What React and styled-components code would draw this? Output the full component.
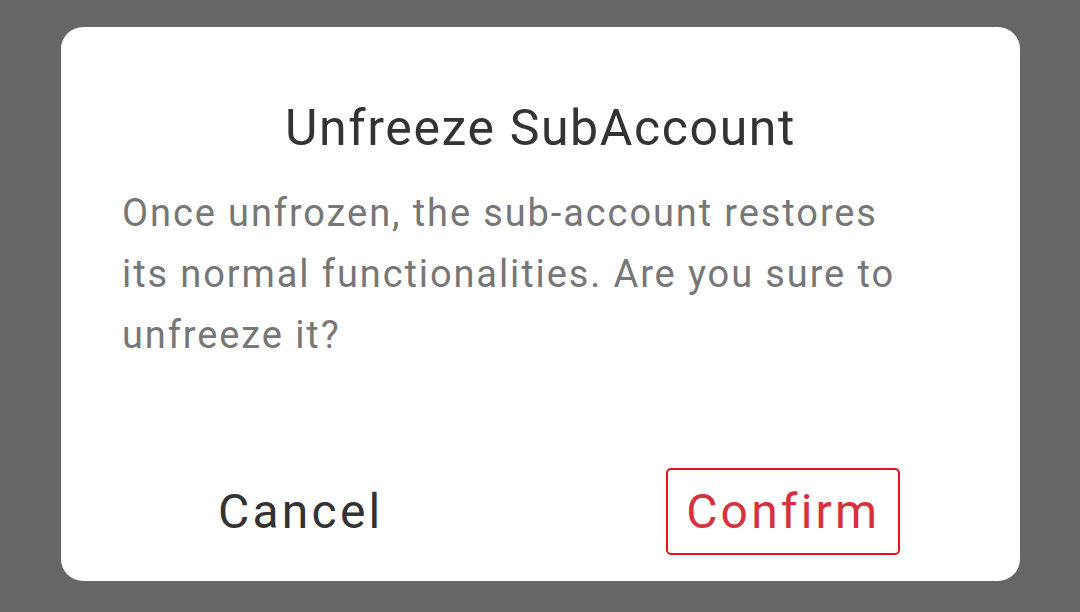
import React from 'react'
import styled, { createGlobalStyle } from 'styled-components'

const Global = createGlobalStyle`
	html, body {
		margin: 0;
		padding: 0;
		background: #666666;
		font-family: Roboto, "Liberation Sans", sans-serif;
	}
`

const Backdrop = styled.div`
	width: 1080px;
	height: 612px;
	background: #666666;
	padding: 27px 60px 31px 61px;
	box-sizing: border-box;
`

const Dialog = styled.div`
	height: 100%;
	background: #ffffff;
	border-radius: 22px;
	display: flex;
	flex-direction: column;
`

const Title = styled.h2`
	margin: 0;
	padding-top: 71px;
	text-align: center;
	font-size: 50px;
	font-weight: 400;
	line-height: 60px;
	letter-spacing: 1.6px;
	color: #333333;
`

const Message = styled.p`
	margin: 25px 0 0 61px;
	width: 800px;
	font-size: 38px;
	line-height: 61px;
	color: #777777;
	letter-spacing: 1.9px;
`

const Actions = styled.div`
	margin-top: auto;
	margin-bottom: 26px;
	display: grid;
	grid-template-columns: 1fr 1fr;
	align-items: center;
`

const Action = styled.button`
	justify-self: center;
	background: none;
	font-family: inherit;
	font-size: 48px;
	line-height: 1;
	letter-spacing: 3.2px;
	color: ${p => (p.$danger ? '#d6323e' : '#333333')};
	border: ${p => (p.$danger ? '2.5px solid #e8101a' : 'none')};
	border-radius: 5px;
	width: ${p => (p.$danger ? '234px' : 'auto')};
	height: 87px;
	padding: 0;
	margin-left: ${p => (p.$danger ? '6px' : '0')};
`

export default function App() {
	return (
		<>
			<Global />
			<Backdrop>
				<Dialog>
					<Title>Unfreeze SubAccount</Title>
					<Message>
						Once unfrozen, the sub-account restores its normal functionalities. Are you sure to unfreeze it?
					</Message>
					<Actions>
						<Action>Cancel</Action>
						<Action $danger>Confirm</Action>
					</Actions>
				</Dialog>
			</Backdrop>
		</>
	)
}
